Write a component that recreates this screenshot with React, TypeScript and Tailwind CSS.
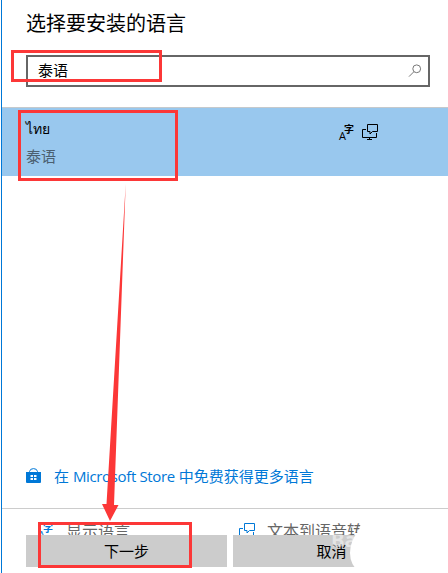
import type { ReactNode } from 'react';

function SearchIcon() {
  return (
    <svg width="14" height="14" viewBox="0 0 14 14" fill="none" stroke="#777" strokeWidth="1">
      <circle cx="8.7" cy="4.8" r="3.9" />
      <path d="M5.9 7.7 1 12.6" />
    </svg>
  );
}

function DisplayIcon({ className = '' }: { className?: string }) {
  return (
    <span className={`relative block h-4 w-4 leading-none ${className}`}>
      <span className="absolute left-0 top-[6px] text-[11px] leading-[11px]">A</span>
      <span className="absolute left-[5px] top-0 text-[10px] leading-[10px] font-bold">字</span>
    </span>
  );
}

function SpeechIcon({ className = '' }: { className?: string }) {
  return (
    <svg width="16" height="16" viewBox="0 0 16 16" fill="none" stroke="currentColor" className={className}>
      <path d="M4 5.5H.5v8h14V9" />
      <path d="M7.5 13.5v2M5 15.5h5" />
      <path d="M5.5.5h10v7h-5L8 10V7.5H5.5z" />
    </svg>
  );
}

function StoreIcon() {
  return (
    <svg width="15" height="16" viewBox="0 0 15 16" className="text-[#0078d7]">
      <path d="M3.5 5V3.5Q4 .6 7.5.6t4 2.9V5" fill="none" stroke="currentColor" />
      <path d="M0 4h15v10q0 1-1 1H1q-1 0-1-1z" fill="currentColor" />
      <path d="M4.500 7h2.500v2H4.500zM8 7h2.500v2H8zM4.500 10h2.500v2H4.500zM8 10h2.500v2H8z" fill="#fff" />
    </svg>
  );
}

function Highlight({ className }: { className: string }) {
  return <div className={`absolute border-[3px] border-[#fc3737] ${className}`} />;
}

function Feature({ icon, label, className }: { icon: ReactNode; label: string; className: string }) {
  return (
    <div className={`flex items-start text-[#666] ${className}`}>
      {icon}
      <span className="whitespace-nowrap text-[16px] leading-4">{label}</span>
    </div>
  );
}

export default function App() {
  return (
    <div className="relative h-[573px] w-[448px] overflow-hidden bg-white pl-px font-['Open_Sans','Noto_Sans_CJK_SC',sans-serif] text-black">
      <div className="flex h-full flex-col border-l border-[#0078d7]">
        <h1 className="ml-6 mt-[10px] h-7 text-[20px] leading-7">选择要安装的语言</h1>
        <div className="ml-6 mt-[17px] flex h-8 w-[404px] items-center justify-between border-2 border-[#666] pl-[10px] pr-[6px]">
          <span className="-mt-[3px] text-[15px] leading-5">泰语</span>
          <SearchIcon />
        </div>

        <div className="mt-5 flex h-[69px] justify-between border-t border-[#c5c9cc] bg-[#99c8ee] pl-6 pr-[70px]">
          <div className="pt-[11px]">
            <div className="h-5 text-[14px] leading-5">ไทย</div>
            <div className="mt-[7px] h-5 text-[15px] leading-5 text-[#4b5f70]">泰语</div>
          </div>
          <div className="flex gap-[7px] pt-4">
            <DisplayIcon />
            <SpeechIcon />
          </div>
        </div>

        <div className="ml-6 mt-[289px] flex h-[22px] items-center text-[#0078d7]">
          <StoreIcon />
          <span className="ml-[13px] whitespace-nowrap text-[15px] leading-[22px]">
            在 <span className="tracking-[-0.35px]">Microsoft Store</span> 中免费获得更多语言
          </span>
        </div>

        <div className="mt-[21px] h-[65px] border-t border-[#ccc]">
          <div className="flex h-[26px] items-end overflow-hidden pl-9">
            <Feature
              className="h-3 w-[201px]"
              icon={<DisplayIcon className="mr-3 shrink-0 text-[#0078d7]" />}
              label="显示语言"
            />
            <Feature
              className="h-3"
              icon={<SpeechIcon className="mr-3 shrink-0 text-[#0078d7]" />}
              label="文本到语音转"
            />
          </div>
          <div className="flex gap-[6px] pl-6 text-[15px]">
            <button className="h-8 w-[201px] bg-[#ccc]">下一步</button>
            <button className="h-8 w-[197px] bg-[#ccc]">取消</button>
          </div>
        </div>
      </div>

      {/* faded stamp over the lower right corner */}
      <div className="absolute left-[331px] top-[530px] text-[20px] leading-5 font-bold text-white/50">Bai</div>
      <svg className="absolute left-[340px] top-[515px]" width="108" height="58" viewBox="0 0 108 58">
        <path d="M23 0h85v58H20Q10 50 10 38 10 26 19 15z" fill="#fff" />
      </svg>

      <Highlight className="left-[11px] top-[50px] h-8 w-[151px]" />
      <Highlight className="left-[18px] top-[110px] h-[71px] w-[160px]" />
      <Highlight className="left-[38px] top-[522px] h-[46px] w-[154px]" />
      <svg className="absolute left-[100px] top-[183px]" width="30" height="340" viewBox="0 0 30 340" fill="#fc3737">
        <path d="M25.7 1 14 322h4.5L10 338 2 321h4.5z" />
      </svg>
    </div>
  );
}
